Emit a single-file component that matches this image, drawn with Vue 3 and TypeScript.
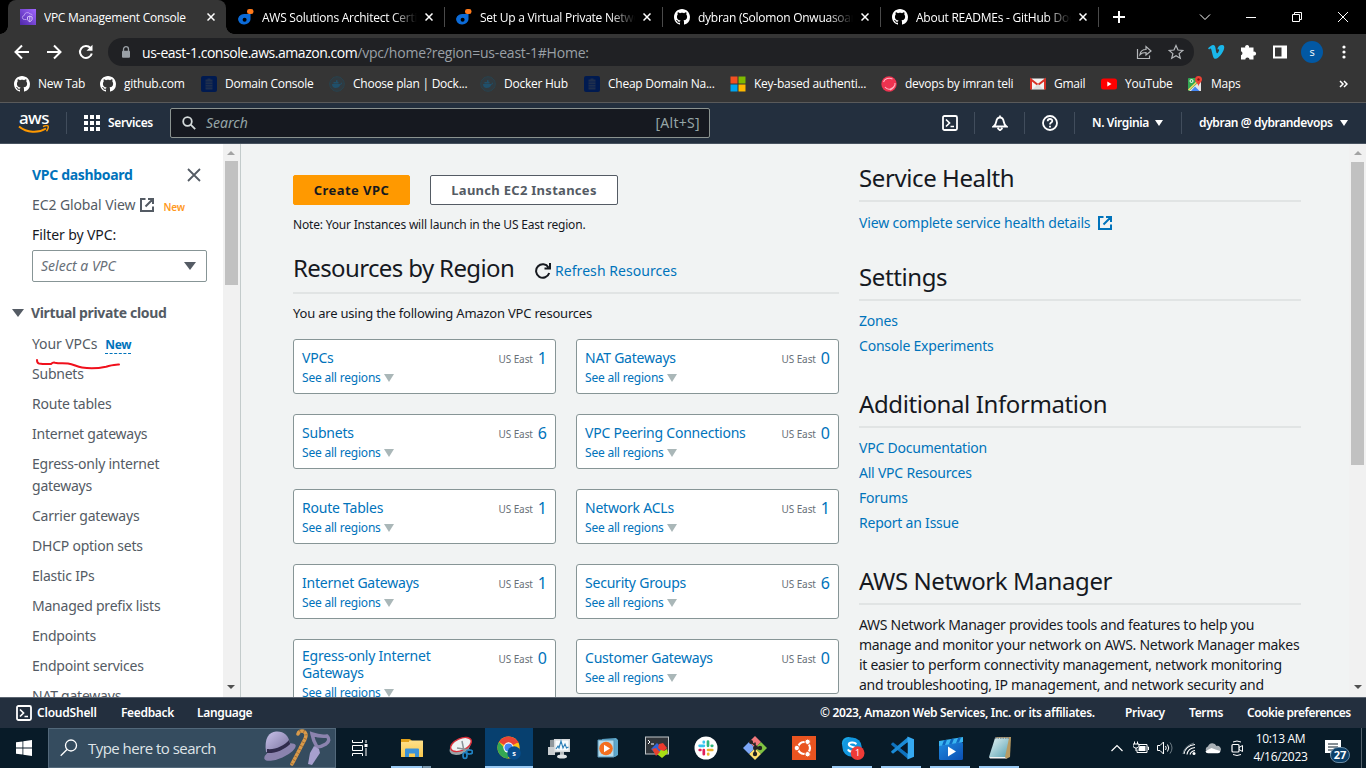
<script setup lang="ts">
interface Tab { title: string; icon: string; active?: boolean }
interface Card { name: string; count: number }
interface Task { icon: string; state?: string }

const tabs: Tab[] = [
  { title: 'VPC Management Console', icon: 'vpc', active: true },
  { title: 'AWS Solutions Architect Certi', icon: 'do' },
  { title: 'Set Up a Virtual Private Netwo', icon: 'do' },
  { title: 'dybran (Solomon Onwuasoan', icon: 'github' },
  { title: 'About READMEs - GitHub Doc', icon: 'github' },
]

const bookmarks: { label: string; icon: string }[] = [
  { label: 'New Tab', icon: 'github' },
  { label: 'github.com', icon: 'github' },
  { label: 'Domain Console', icon: 'domain' },
  { label: 'Choose plan | Dock...', icon: 'docker' },
  { label: 'Docker Hub', icon: 'docker' },
  { label: 'Cheap Domain Na...', icon: 'domain' },
  { label: 'Key-based authenti...', icon: 'microsoft' },
  { label: 'devops by imran teli', icon: 'ball' },
  { label: 'Gmail', icon: 'gmail' },
  { label: 'YouTube', icon: 'youtube' },
  { label: 'Maps', icon: 'maps' },
]

const sideLinks: string[] = [
  'Subnets', 'Route tables', 'Internet gateways', 'Egress-only internet gateways',
  'Carrier gateways', 'DHCP option sets', 'Elastic IPs', 'Managed prefix lists',
  'Endpoints', 'Endpoint services', 'NAT gateways',
]

const cards: Card[] = [
  { name: 'VPCs', count: 1 },
  { name: 'NAT Gateways', count: 0 },
  { name: 'Subnets', count: 6 },
  { name: 'VPC Peering Connections', count: 0 },
  { name: 'Route Tables', count: 1 },
  { name: 'Network ACLs', count: 1 },
  { name: 'Internet Gateways', count: 1 },
  { name: 'Security Groups', count: 6 },
  { name: 'Egress-only Internet Gateways', count: 0 },
  { name: 'Customer Gateways', count: 0 },
]

const infoLinks: string[] = ['VPC Documentation', 'All VPC Resources', 'Forums', 'Report an Issue']

const tasks: Task[] = [
  { icon: 'explorer', state: 'open stacked' },
  { icon: 'snip' },
  { icon: 'chrome', state: 'focused' },
  { icon: 'perfmon' },
  { icon: 'media' },
  { icon: 'terminal' },
  { icon: 'slack' },
  { icon: 'git' },
  { icon: 'ubuntu' },
  { icon: 'skype', state: 'open' },
  { icon: 'vscode', state: 'open' },
  { icon: 'films', state: 'open' },
  { icon: 'notepad', state: 'open' },
]

const trayIcons: string[] = ['chevron', 'battery', 'speaker', 'wifi', 'cloud', 'camera']
</script>

<template>
  <div class="screen">
    <svg class="defs" width="0" height="0">
      <defs>
        <linearGradient id="gVpc" x1="0" y1="1" x2="1" y2="0"><stop offset="0" stop-color="#4d27a8" /><stop offset="1" stop-color="#a166ff" /></linearGradient>
        <linearGradient id="gFolder" x1="0" y1="0" x2="0" y2="1"><stop offset="0" stop-color="#ffe08a" /><stop offset="1" stop-color="#f9c84c" /></linearGradient>
        <linearGradient id="gFilm" x1="0" y1="0" x2="1" y2="1"><stop offset="0" stop-color="#1f8be0" /><stop offset="1" stop-color="#0b4fb3" /></linearGradient>
        <linearGradient id="gPad" x1="0" y1="0" x2="1" y2="1"><stop offset="0" stop-color="#e6f4f4" /><stop offset="1" stop-color="#5aa3b4" /></linearGradient>
        <linearGradient id="gHat" x1="0" y1="0" x2="1" y2="1"><stop offset="0" stop-color="#c9c2ea" /><stop offset="1" stop-color="#77709c" /></linearGradient>
      </defs>

      <symbol id="vpc" viewBox="0 0 16 16">
        <rect width="16" height="16" fill="url(#gVpc)" />
        <path d="M6.500 10.500H4.600a2 2 0 0 1-.4-4A3.200 3.200 0 0 1 10 4.900a2 2 0 0 1 2.300 1.500" fill="none" stroke="#c9aef8" stroke-width=".8" />
        <path d="M7.500 7.900l2.300-.8 2.300.8v2.200c0 1.200-1 2-2.300 2.600-1.300-.6-2.300-1.400-2.300-2.600zM9.800 7.100v5.500" fill="none" stroke="#e8dcff" stroke-width=".8" />
      </symbol>
      <symbol id="do" viewBox="0 0 16 16">
        <path d="M8 5h4.500v5.200a6.200 5.300 0 1 1-4.500-5.100z" fill="#0c6bd8" />
        <circle cx="6.600" cy="10.700" r="2" fill="#000" />
        <rect x="9" y="0" width="6.500" height="5" rx="2.300" fill="#ff7a1a" />
      </symbol>
      <symbol id="github" viewBox="0 0 16 16">
        <path fill="#fff" d="M8 0C3.58 0 0 3.58 0 8c0 3.54 2.29 6.53 5.47 7.59.4.07.55-.17.55-.38 0-.19-.01-.82-.01-1.49-2.01.37-2.53-.49-2.69-.94-.09-.23-.48-.94-.82-1.13-.28-.15-.68-.52-.01-.53.63-.01 1.08.58 1.23.82.72 1.21 1.87.87 2.33.66.07-.52.28-.87.51-1.07-1.78-.2-3.64-.89-3.64-3.95 0-.87.31-1.59.82-2.15-.08-.2-.36-1.02.08-2.12 0 0 .67-.21 2.2.82.64-.18 1.32-.27 2-.27.68 0 1.36.09 2 .27 1.53-1.04 2.2-.82 2.2-.82.44 1.1.16 1.92.08 2.12.51.56.82 1.27.82 2.15 0 3.07-1.87 3.75-3.65 3.95.29.25.54.73.54 1.48 0 1.07-.01 1.93-.01 2.2 0 .21.15.46.55.38A8.013 8.013 0 0 0 16 8c0-4.420-3.580-8-8-8z" />
      </symbol>
      <symbol id="domain" viewBox="0 0 16 16">
        <rect width="16" height="16" rx="2" fill="#001a50" />
        <path d="M6.500 2.500h3v1h2v10h-7v-10h2z" fill="#1f2f4d" />
        <path d="M4.500 6h7M4.500 8.500h7M4.500 11h7" stroke="#001a50" stroke-width=".6" />
      </symbol>
      <symbol id="docker" viewBox="0 0 16 16">
        <circle cx="8" cy="8" r="7.300" fill="#303a40" stroke="#28434f" stroke-width="1" />
        <path d="M3 8h8.500c.2-1 .8-1.500 1.500-1.600-.1 1.600-.8 2.200-1.700 2.300C10.500 11 9 12 6.800 12 4.300 12 3 10.500 3 8zM4.500 6h5v1.500h-5zM7 4.300h1.500V6H7z" fill="#20506b" />
      </symbol>
      <symbol id="microsoft" viewBox="0 0 16 16">
        <path d="M.5.5h7v7h-7z" fill="#f25022" /><path d="M8.500.5h7v7h-7z" fill="#7fba00" /><path d="M.5 8.500h7v7h-7z" fill="#00a4ef" /><path d="M8.500 8.500h7v7h-7z" fill="#ffb900" />
      </symbol>
      <symbol id="ball" viewBox="0 0 16 16">
        <circle cx="8" cy="8" r="7.700" fill="#ee3350" /><path d="M2.500 6a6 5 0 0 1 9-3M4 11c3 4 8 2 10-2M9 14c3-1 5.500-4 5-7" stroke="#ffb3c0" stroke-width="1.100" fill="none" />
      </symbol>
      <symbol id="gmail" viewBox="0 0 16 16">
        <rect x="1" y="2.500" width="14" height="11" rx="1" fill="#f2f2f2" /><path d="M1 13.500v-10l7 5.500 7-5.500v10" fill="none" stroke="#d93025" stroke-width="2" /><path d="M3 13l5-5 5 5z" fill="#ddd" />
      </symbol>
      <symbol id="youtube" viewBox="0 0 16 16">
        <rect y="2.500" width="16" height="11" rx="2.500" fill="#f00" /><path d="M6.300 5.600v4.800l4.200-2.400z" fill="#fff" />
      </symbol>
      <symbol id="maps" viewBox="0 0 16 16">
        <rect x="1" y="2" width="13" height="13" rx="1" fill="#34a853" /><path d="M2 15L14 4v11z" fill="#e5e5e5" /><path d="M4 15l4-4.500L12.500 15z" fill="#4285f4" /><path d="M1.500 14L13 3" stroke="#fdd663" stroke-width="1.500" /><path d="M11.500 0a3.500 3.500 0 0 1 3.500 3.500c0 2.500-3 3.500-3.500 7-.5-3.500-3.500-4.500-3.500-7A3.500 3.500 0 0 1 11.500 0z" fill="#ea4335" /><circle cx="11.500" cy="3.500" r="1.200" fill="#811" /><circle cx="4.500" cy="5" r="1.500" fill="none" stroke="#fff" />
      </symbol>
      <symbol id="external" viewBox="0 0 16 16">
        <path d="M6.500 2H2v12h12V9.500M9 2h5v5M14 2L6.500 9.500" fill="none" stroke="currentColor" stroke-width="2" />
      </symbol>
      <symbol id="shell" viewBox="0 0 16 16">
        <rect x="1" y="1" width="14" height="14" rx="1.500" fill="none" stroke="#fff" stroke-width="1.800" /><path d="M4 4.500L7.500 8 4 11.500M8.500 11.500H12" fill="none" stroke="#fff" stroke-width="1.700" />
      </symbol>

      <symbol id="explorer" viewBox="0 0 24 24">
        <path d="M1 3h9l2 2H1z" fill="#d99a10" /><rect x="1" y="4.500" width="22" height="16.500" rx=".5" fill="url(#gFolder)" /><path d="M1 3h8v3H1z" fill="#e3a21a" /><path d="M5 21v-7.500q0-1 1-1h12q1 0 1 1V21h-4v-3.500H9V21z" fill="#3b92d9" />
      </symbol>
      <symbol id="snip" viewBox="0 0 24 24">
        <ellipse cx="11" cy="11.500" rx="11" ry="6.500" transform="rotate(-24 11 11.500)" fill="#9aa3a8" /><ellipse cx="12" cy="8.500" rx="11" ry="6" transform="rotate(-24 12 8.500)" fill="#eef2f3" stroke="#d92f3a" stroke-width="1.400" /><path d="M8 12l13 2M13 5l2 10" stroke="#8a9499" stroke-width="1.500" /><ellipse cx="20.500" cy="16" rx="3" ry="2" fill="none" stroke="#2183c4" stroke-width="1.700" /><ellipse cx="16" cy="19.500" rx="2" ry="3" fill="none" stroke="#2183c4" stroke-width="1.700" />
      </symbol>
      <symbol id="chrome" viewBox="0 0 26 26">
        <circle cx="12.500" cy="12.500" r="12" fill="#fbc116" /><path d="M12.500 12.500L2.100 6.500A12 12 0 0 1 23 6.700z" fill="#ea4335" /><path d="M2.100 6.500A12 12 0 0 0 11.500 24.500l6-9.500-8-.500z" fill="#34a853" /><path d="M12.500 6.500h10.400" stroke="#ea4335" stroke-width="2" /><circle cx="12.500" cy="12.500" r="5.600" fill="#fff" /><circle cx="12.500" cy="12.500" r="4.400" fill="#4285f4" /><circle cx="18.500" cy="18.500" r="7.300" fill="#074d8c" /><text x="18.500" y="21.300" text-anchor="middle" class="badge-text">s</text>
      </symbol>
      <symbol id="perfmon" viewBox="0 0 24 24">
        <path d="M3 4l14-1v13L3 17z" fill="#8f979c" /><path d="M1 11h7v8H1z" fill="#c9cdd0" /><path d="M7 3h16v13H7z" fill="#d6dadc" /><path d="M8.500 4.500h13v10h-13z" fill="#f7fbfd" /><path d="M9 13l2-3 1 2 2-7 2 7 2-4 1.500 4 2-1" fill="none" stroke="#2b7fb8" stroke-width="1.100" /><path d="M13 16h4v3h-4z" fill="#b6bbbe" /><ellipse cx="15" cy="20.500" rx="5" ry="2" fill="#dfe3e5" />
      </symbol>
      <symbol id="media" viewBox="0 0 24 24">
        <path d="M6 3l14-1 2 2v15l-3 2H8z" fill="#5ea8cc" /><path d="M2 4h16v17H2z" fill="#b5dcec" stroke="#5695b8" /><circle cx="10" cy="12.500" r="6.800" fill="#f36f1f" /><path d="M8 8.700v7.600l6-3.800z" fill="#fff" />
      </symbol>
      <symbol id="terminal" viewBox="0 0 24 24">
        <rect x=".5" y="1" width="23" height="17" fill="#30353a" stroke="#c0c5c8" /><path d="M3 4l2 2-2 2M6 8h3" stroke="#fff" fill="none" /><path d="M6 13l6-6 6 6-6 6z" fill="#2e64d8" /><path d="M14 8l4-1 4 5-4 4-5-4z" fill="#ee3a2c" /><path d="M12 18l4-4 3 1 3-2 1 4-6 5z" fill="#a7de14" /><path d="M7 13l4-1 4 4-4 4z" fill="#e8412f" />
      </symbol>
      <symbol id="slack" viewBox="0 0 24 24">
        <circle cx="12" cy="12" r="11.500" fill="#fff" /><g stroke-width="2.700" stroke-linecap="round"><path d="M9.800 5.800v.7M5.600 9.800h4.300" stroke="#36c5f0" /><path d="M14 5.500v4.300M18.300 9.800h-.6" stroke="#2eb67d" /><path d="M14 14h4.300M14.200 18.400v-.6" stroke="#ecb22e" /><path d="M9.800 14.200v4M5.700 14h.7" stroke="#e01e5a" /></g>
      </symbol>
      <symbol id="git" viewBox="0 0 24 24">
        <path d="M12 0l6 6-6 6-6-6z" fill="#f0787c" /><path d="M18 6l6 6-6 6-6-6z" fill="#80c342" /><path d="M12 12l6 6-6 6-6-6z" fill="#ffdf6e" /><path d="M6 6l6 6-6 6-6-6z" fill="#7da7f7" /><path d="M12 6.500v11M8 6l8 6.500h-4" stroke="#222" stroke-width="1.500" fill="none" /><circle cx="8" cy="6" r="2" fill="#222" /><circle cx="12" cy="12" r="2" fill="#222" /><circle cx="12" cy="18" r="2.200" fill="#222" /><circle cx="17" cy="12" r="2.200" fill="#222" />
      </symbol>
      <symbol id="ubuntu" viewBox="0 0 24 24">
        <rect width="24" height="24" fill="#e95420" /><circle cx="12" cy="12" r="6" fill="none" stroke="#fff" stroke-width="2.200" /><g fill="#fff" stroke="#e95420"><circle cx="4.800" cy="12" r="2.700" /><circle cx="15.600" cy="5.800" r="2.700" /><circle cx="15.600" cy="18.200" r="2.700" /></g>
      </symbol>
      <symbol id="skype" viewBox="0 0 26 26">
        <circle cx="8" cy="8" r="7" fill="#1aa7e8" /><circle cx="16" cy="16" r="7" fill="#0b87cc" /><circle cx="12" cy="12" r="10.500" fill="#1298e0" /><path d="M16 8.300c-1-1.600-7.500-2-7.500 1 0 3.400 7.700 1.800 7.700 5.200 0 3.200-7 3-8.200.8" fill="none" stroke="#fff" stroke-width="2.300" stroke-linecap="round" /><circle cx="18" cy="18.500" r="7.500" fill="#ef3b37" /><text x="18" y="22" text-anchor="middle" class="badge-one">1</text>
      </symbol>
      <symbol id="vscode" viewBox="0 0 24 24">
        <path d="M1 8l2-1.700L18 18v5L1.500 9z" fill="#0f72bd" /><path d="M1 16l2 1.700L18 6V1L1.500 15z" fill="#1b8bd6" /><path d="M17.500.5L24 3.200v17.600l-6.500 2.700z" fill="#35a9f1" /><path d="M17.500 6.500v11L10.500 12z" fill="#06192a" />
      </symbol>
      <symbol id="films" viewBox="0 0 24 24">
        <rect y="6" width="24" height="18" rx="1.500" fill="url(#gFilm)" /><path d="M0 5l24-4v5l-24 4z" fill="#39b5f1" /><path d="M5 4.200l3-.5-2 5.300-3 .5zM12 3l3-.5-2 5.300-3 .5zM19 1.900l3-.5-2 5.200-3 .5z" fill="#0f67bf" /><path d="M9 10.500v10l8-5z" fill="#fff" />
      </symbol>
      <symbol id="notepad" viewBox="0 0 24 24">
        <path d="M8 1h15l-1 20-4 2z" fill="#b89b62" /><path d="M7 2h14l-4 19H1z" fill="url(#gPad)" /><path d="M1 21h16l1.500 1.500L2 22.500z" fill="#f4f4f4" /><path d="M7 2h14" stroke="#7d8588" stroke-width="1.500" stroke-dasharray="1.500 1" />
      </symbol>

      <symbol id="chevron" viewBox="0 0 16 16"><path d="M2.500 11L8 5.500l5.500 5.500" fill="none" stroke="#fff" stroke-width="1.200" /></symbol>
      <symbol id="battery" viewBox="0 0 16 16"><path d="M5.500 4.500H14v8H4V9.500M14.500 7h1v3" fill="none" stroke="#fff" /><path d="M6.500 6H12.500v5h-7V9z" fill="#fff" /><path d="M1.500 1.500v2.500M4.500 1.500v2.500M0 4h6v2.500L4 8H2L0 6.500zM3 8v3" fill="none" stroke="#fff" /></symbol>
      <symbol id="speaker" viewBox="0 0 16 16"><path d="M.5 5.500h2.500l3.500-3.500v12L3 10.500H.5z" fill="none" stroke="#fff" /><path d="M8.500 6q1.500 2 0 4M10.500 4.500q2.500 3.500 0 7" fill="none" stroke="#fff" /><path d="M13 2.500q4 5.500 0 11" fill="none" stroke="#6f7d86" /></symbol>
      <symbol id="wifi" viewBox="0 0 16 16"><path d="M3 14C3.500 9 7.500 5 14 4.500M6 14.500C6.500 11 9.500 8 14 7.500M9 14.500C9.500 12.500 11 11 14 10.500" fill="none" stroke="#fff" stroke-width="1.100" /><path d="M2 14Q3 6 13 3" fill="none" stroke="#82919a" stroke-width=".8" /><circle cx="13" cy="13.500" r="1.500" fill="#fff" /></symbol>
      <symbol id="cloud" viewBox="0 0 16 16"><path d="M1 10.500a3 3 0 0 1 2-4 4.500 4.500 0 0 1 8.500-.5 3.500 3.500 0 0 1 4 5z" fill="#a9b0b5" /><path d="M.5 11l6-3 4 1.500 5 1.500q-.5 2.200-2.500 2.200H3Q.7 13.200.5 11z" fill="#fff" /></symbol>
      <symbol id="camera" viewBox="0 0 16 16"><rect x="3" y="4.500" width="7" height="7.500" rx="1" fill="none" stroke="#fff" stroke-width="1.200" /><path d="M10 7.500l3.500-2v6L10 9.500M4 2q4-2 8 0M4 14.500q4 2 8 0" fill="none" stroke="#fff" /></symbol>
    </svg>

    <!-- browser chrome -->
    <header class="tabstrip">
      <div v-for="(tab, i) in tabs" :key="i" class="tab" :class="{ active: tab.active }">
        <svg class="ico16"><use :href="'#' + tab.icon" /></svg>
        <span class="tab-title">{{ tab.title }}</span>
        <svg class="tab-close" viewBox="0 0 8 8"><path d="M.5.5l7 7M7.500.5l-7 7" /></svg>
      </div>
      <svg class="plus" viewBox="0 0 12 12"><path d="M6 0v12M0 6h12" /></svg>
      <div class="win-controls">
        <svg viewBox="0 0 12 12"><path d="M1 3.500l5 5 5-5" /></svg>
        <svg viewBox="0 0 12 12"><path d="M1 6.500h10" /></svg>
        <svg viewBox="0 0 12 12"><path d="M1.500 3.500h7v7h-7zM3.500 3.500v-2h7v7h-2" /></svg>
        <svg viewBox="0 0 12 12"><path d="M1 1l10 10M11 1L1 11" /></svg>
      </div>
    </header>

    <div class="toolbar">
      <div class="nav-buttons">
        <svg viewBox="0 0 16 16"><path d="M15 8H2M8 1.500L1.500 8 8 14.500" /></svg>
        <svg viewBox="0 0 16 16"><path d="M1 8h13M8 1.500L14.500 8 8 14.500" /></svg>
        <svg viewBox="0 0 16 16"><path d="M13.800 9.500A6 6 0 1 1 12.500 4" /><path d="M14.500.8v6H8.500z" class="solid" /></svg>
      </div>
      <div class="omnibox">
        <svg class="lock" viewBox="0 0 10 13"><path d="M2.500 5V3.200a2.500 2.500 0 0 1 5 0V5" fill="none" stroke="#9aa0a6" stroke-width="1.300" /><rect x="1" y="4.800" width="8" height="7" rx="1" fill="#9aa0a6" /></svg>
        <span class="url"><b>us-east-1.console.aws.amazon.com</b>/vpc/home?region=us-east-1#Home:</span>
        <svg class="omni-ico" viewBox="0 0 16 16"><path d="M1.500 5v9.500h12v-3M4 10.500c.5-3.500 3-5 6-5V2.500L15 7l-5 4V8.500c-2.500 0-4.500.3-6 2z" /></svg>
        <svg class="omni-ico" viewBox="0 0 16 16"><path d="M8 1.500l2 4.500 4.800.4-3.700 3.200 1.200 4.700L8 11.800l-4.300 2.500 1.200-4.700L1.200 6.400 6 6z" /></svg>
      </div>
      <div class="extensions">
        <svg viewBox="0 0 18 18"><path d="M1 5.200C3 3.500 4.800 2 6 1.900c2.800-.3 2.500 4 3.300 7 .6 2.200 1.200 1.500 2.200-.2 1-1.600 1-3.100-1.300-2.300C11 3 13 1.700 15.300 1.900c1.800.2 2.300 1.600 1.700 4-.9 3.600-5.500 9.600-8.300 9.800-2.200.1-2.700-2.400-3.300-4.800C4.600 8 4.300 5.600 3.600 5.600c-.4 0-1 .5-1.500.9z" fill="#1ab7ea" /></svg>
        <svg viewBox="0 0 18 18"><path d="M2 4.500h4.200a2 2 0 1 1 3.800 0h4.500v4.200a2 2 0 1 1 0 3.800v4h-4a2.100 2.100 0 0 0-4.200 0H2v-4.200a2.100 2.100 0 0 0 0-4z" fill="#fff" /></svg>
        <svg viewBox="0 0 18 18"><path d="M3 3.500h12v11H3z" fill="none" stroke="#fff" stroke-width="2" /><path d="M10.500 3h5v12h-5z" fill="#fff" /></svg>
        <span class="avatar">s</span>
        <svg viewBox="0 0 18 18" fill="#fff"><circle cx="9" cy="4" r="1.600" /><circle cx="9" cy="9" r="1.600" /><circle cx="9" cy="14" r="1.600" /></svg>
      </div>
    </div>

    <div class="bookmarks">
      <div v-for="(b, i) in bookmarks" :key="i" class="bookmark">
        <svg class="ico16"><use :href="'#' + b.icon" /></svg><span>{{ b.label }}</span>
      </div>
      <svg class="more" viewBox="0 0 9 8"><path d="M1 1l3 3-3 3M5 1l3 3-3 3" /></svg>
    </div>

    <!-- console navigation -->
    <nav class="aws-nav">
      <div class="logo-cell">
        <div class="logo">
          <span>aws</span>
          <svg viewBox="0 0 32 10"><path d="M1 1.500C9 8 20 8.500 28 3.500" fill="none" stroke="#f90" stroke-width="2" /><path d="M25 1.600c2-.9 4.300-1.200 5-.6.700.700-.1 3.600-1.500 5.200" fill="none" stroke="#f90" stroke-width="1.400" /></svg>
        </div>
      </div>
      <div class="services">
        <svg viewBox="0 0 16 16" fill="#fff"><path d="M0 0h4v4H0zM6 0h4v4H6zM12 0h4v4h-4zM0 6h4v4H0zM6 6h4v4H6zM12 6h4v4h-4zM0 12h4v4H0zM6 12h4v4H6zM12 12h4v4h-4z" /></svg>
        <span>Services</span>
      </div>
      <div class="nav-search">
        <svg viewBox="0 0 14 14"><circle cx="5.500" cy="5.500" r="4.300" /><path d="M8.700 8.700l4.500 4.500" /></svg>
        <i>Search</i>
        <span>[Alt+S]</span>
      </div>
      <div class="nav-right">
        <div class="nav-icon"><svg><use href="#shell" /></svg></div>
        <div class="nav-icon"><svg viewBox="0 0 16 16"><path d="M8 .5v2M1.500 11.500c2-1.500 2.500-3 2.800-5C4.700 3.800 6 2.500 8 2.500s3.300 1.300 3.700 4c.3 2 .8 3.500 2.800 5zM5.500 13L8 15.300l2.500-2.300" /></svg></div>
        <div class="nav-icon"><svg viewBox="0 0 16 16"><circle cx="8" cy="8" r="7" /><path d="M5.700 6.300c0-3 4.600-3 4.600-.3C10.300 7.700 8 7.500 8 9.500M8 10.800v1.700" /></svg></div>
        <div class="region"><span>N. Virginia</span><i class="caret"></i></div>
        <div class="account"><span>dybran @ dybrandevops</span><i class="caret"></i></div>
      </div>
    </nav>

    <main class="body">
      <aside class="sidebar">
        <div class="side-head">
          <a>VPC dashboard</a>
          <svg viewBox="0 0 14 14"><path d="M1 1l12 12M13 1L1 13" /></svg>
        </div>
        <div class="side-row ec2"><span>EC2 Global View</span><svg class="ico16 ext"><use href="#external" /></svg><em>New</em></div>
        <div class="side-row dark">Filter by VPC:</div>
        <div class="select"><i>Select a VPC</i><b></b></div>
        <div class="side-section"><b></b><span>Virtual private cloud</span></div>
        <div class="side-row vpcs"><span>Your VPCs</span><strong>New</strong>
          <svg class="scribble" viewBox="0 0 84 12"><path d="M1 1q0 3 2 3.500c4 .7 8 .6 12 .5q2-2 4-1.300c4 1 8 .3 13 .8 6 .8 8 3 14 4 8 1.300 17 .7 24-.8 5-1.200 9-2.500 13-2.200" /></svg>
        </div>
        <div v-for="l in sideLinks" :key="l" class="side-row">{{ l }}</div>
      </aside>
      <div class="scroll side-scroll"><i class="up"></i><b></b><i class="down"></i></div>

      <section class="content">
        <div class="left">
          <div class="buttons"><button class="primary">Create VPC</button><button>Launch EC2 Instances</button></div>
          <p class="note">Note: Your Instances will launch in the US East region.</p>
          <div class="title-row">
            <h2>Resources by Region</h2>
            <svg viewBox="0 0 16 16"><path d="M14.200 10A6.700 6.700 0 1 1 13.500 4.500M15 0v5.500H9.500" /></svg>
            <a>Refresh Resources</a>
          </div>
          <p class="using">You are using the following Amazon VPC resources</p>
          <div class="cards">
            <div v-for="c in cards" :key="c.name" class="card" :class="{ tall: c.name.length > 25 }">
              <div class="card-main">
                <a class="card-name">{{ c.name }}</a>
                <a class="card-sub">See all regions<b></b></a>
              </div>
              <div class="count"><small>US East</small><span>{{ c.count }}</span></div>
            </div>
          </div>
        </div>
        <div class="right">
          <h2>Service Health</h2>
          <div class="links health"><a>View complete service health details<svg class="ico16"><use href="#external" /></svg></a></div>
          <h2>Settings</h2>
          <div class="links settings"><a>Zones</a><a>Console Experiments</a></div>
          <h2>Additional Information</h2>
          <div class="links info"><a v-for="l in infoLinks" :key="l">{{ l }}</a></div>
          <h2>AWS Network Manager</h2>
          <p class="manager">AWS Network Manager provides tools and features to help you<br>manage and monitor your network on AWS. Network Manager makes<br>it easier to perform connectivity management, network monitoring<br>and troubleshooting, IP management, and network security and</p>
        </div>
      </section>
      <div class="scroll main-scroll"><i class="up"></i><b></b><i class="down"></i></div>
    </main>

    <footer class="aws-footer">
      <svg><use href="#shell" /></svg>
      <span class="f1">CloudShell</span><span class="f2">Feedback</span><span class="f3">Language</span>
      <span class="copyright">© 2023, Amazon Web Services, Inc. or its affiliates.</span>
      <span class="f4">Privacy</span><span class="f5">Terms</span><span class="f6">Cookie preferences</span>
    </footer>

    <div class="taskbar">
      <div class="start"><svg viewBox="0 0 16 16" fill="#fff"><path d="M0 2.300l6.500-.9v6.200H0zM7.300 1.300L16 0v7.600H7.300zM0 8.400h6.500v6.200L0 13.700zM7.300 8.400H16V16l-8.700-1.300z" /></svg></div>
      <div class="win-search">
        <svg class="mag" viewBox="0 0 18 18"><circle cx="11" cy="6.500" r="5.500" /><path d="M7 10.500l-6.300 6.300" /></svg>
        <span>Type here to search</span>
        <svg class="hat" viewBox="0 0 68 38">
          <ellipse cx="17" cy="23" rx="17" ry="6" transform="rotate(-24 17 23)" fill="#8b83ae" />
          <path d="M3 23C1 9 6 3 13 2.500 21 2 25 6 27 14c-5 7-16 11-24 9z" fill="url(#gHat)" />
          <path d="M4 20c8 1 17-3 22-9l1.200 4C21 21 12 24.500 4 24z" fill="#302b4c" />
          <path d="M29 35L42 10C46 1 36 0 35 5" fill="none" stroke="#d89a4b" stroke-width="3.600" stroke-linecap="round" />
          <path d="M29 35L42 10C46 1 36 0 35 5" fill="none" stroke="#a06a30" stroke-width="3.200" stroke-dasharray=".8 3.200" />
          <path d="M49 5q8 3 15 2 4 4-1 8-5 3-9 3-4-7-5-13z" fill="none" stroke="#8b83ae" stroke-width="3.500" />
          <path d="M51 17l5 3 1 4-8 12-4-1 2-11z" fill="#a79fce" />
        </svg>
      </div>
      <div class="taskview"><svg viewBox="0 0 16 16"><path d="M.5 0v2.500h10V0M.5 5.500h10v5H.5zM.5 16v-2.500h10V16M14 0v3M14 8v8" /><path d="M12.500 4h3v3h-3z" fill="#fff" stroke="none" /></svg></div>
      <div class="tasks">
        <div v-for="t in tasks" :key="t.icon" class="task" :class="t.state"><svg><use :href="'#' + t.icon" /></svg></div>
      </div>
      <div class="tray">
        <div v-for="t in trayIcons" :key="t" class="tray-icon"><svg><use :href="'#' + t" /></svg></div>
        <div class="clock"><span>10:13 AM</span><span>4/16/2023</span></div>
        <div class="notif">
          <svg viewBox="0 0 16 16"><path d="M0 0h16v13H9l-4 3v-3H0z" fill="#fff" /><path d="M3 4h10M3 7h10M3 10h6" stroke="#0a1c28" /></svg>
          <span>27</span>
        </div>
      </div>
    </div>
  </div>
</template>

<style>
body { margin: 0; overflow: hidden; }
</style>

<style scoped>
* { box-sizing: border-box; }
.screen { width: 1366px; height: 768px; display: flex; flex-direction: column; overflow: hidden; font-family: "Noto Sans", sans-serif; position: relative; }
.defs { position: absolute; }
svg { display: block; flex: none; }
p, h2 { margin: 0; font-weight: 400; }
.ico16 { width: 16px; height: 16px; }

.tabstrip { height: 34px; background: #000; display: flex; align-items: center; padding-left: 8px; flex: none; font-family: "Open Sans", sans-serif; }
.tab { width: 218px; height: 34px; padding: 0 0 0 12px; display: flex; align-items: center; color: #fff; font-size: 12px; position: relative; }
.tab.active { background: #353535; border-radius: 8px 8px 0 0; }
.tab.active::before, .tab.active::after { content: ""; position: absolute; bottom: 0; width: 8px; height: 8px; background: radial-gradient(circle at 0 0, transparent 7.500px, #353535 8px); }
.tab.active::before { left: -8px; }
.tab.active::after { right: -8px; background: radial-gradient(circle at 100% 0, transparent 7.500px, #353535 8px); }
.tab:not(.active)::after { content: ""; position: absolute; right: -1px; top: 7px; width: 1px; height: 20px; background: #4a4a4a; }
.tab-title { width: 155px; margin-left: 8px; overflow: hidden; white-space: nowrap; letter-spacing: -0.25px; }
.tab:not(.active) .tab-title { -webkit-mask-image: linear-gradient(90deg, #000 130px, transparent 155px); mask-image: linear-gradient(90deg, #000 130px, transparent 155px); }
.tab-close { width: 8px; height: 8px; margin-left: 8px; fill: none; stroke: #fff; stroke-width: 1.500; }
.plus { width: 12px; height: 12px; margin-left: 15px; stroke: #fff; stroke-width: 2; }
.win-controls { margin-left: auto; display: flex; align-items: center; height: 28px; }
.win-controls svg { width: 12px; height: 12px; margin: 0 17px; fill: none; stroke: #fff; stroke-width: 1; }

.toolbar { height: 36px; background: #353535; display: flex; align-items: center; flex: none; }
.nav-buttons { width: 108px; padding-left: 14px; display: flex; gap: 16px; }
.nav-buttons svg { width: 16px; height: 16px; fill: none; stroke: #fff; stroke-width: 2; }
.nav-buttons .solid { fill: #fff; stroke: none; }
.omnibox { width: 1086px; height: 28px; border-radius: 14px; background: #202124; display: flex; align-items: center; padding: 0 10px 0 13px; color: #9aa0a6; }
.lock { width: 10px; height: 13px; }
.url { margin-left: 11px; flex: 1; font-family: "Open Sans", sans-serif; font-size: 14px; letter-spacing: -0.2px; white-space: nowrap; }
.url b { font-weight: 400; color: #fff; letter-spacing: -0.46px; }
.omni-ico { width: 16px; height: 16px; margin-left: 16px; fill: none; stroke: #b5b8bb; stroke-width: 1.200; }
.extensions { display: flex; align-items: center; padding-left: 6px; }
.extensions svg { width: 18px; height: 18px; margin: 0 7px; }
.avatar { width: 22px; height: 22px; border-radius: 50%; background: #0258a3; color: #fff; font: 11px/21px "Open Sans", sans-serif; text-align: center; margin: 0 6px 0 5px; }
.extensions .avatar + svg { margin-left: 6px; }

.bookmarks { height: 32px; background: #353535; display: grid; grid-template-columns: 86px 101px 128px 151px 104px 146px 151px 149px 71px 86px 1fr auto; align-items: center; padding: 0 18px 4px 14px; flex: none; color: #fff; font: 12px/20px "Open Sans", sans-serif; }
.bookmark { display: flex; gap: 8px; align-items: center; white-space: nowrap; letter-spacing: -0.25px; }
.more { width: 9px; height: 8px; fill: none; stroke: #fff; stroke-width: 1.500; }

.aws-nav { height: 42px; background: #232f3e; border-top: 1px solid #5a5a5a; border-bottom: 1px solid #47525f; display: flex; align-items: center; flex: none; color: #fff; font-size: 12px; font-weight: 600; letter-spacing: -0.36px; }
.logo-cell { width: 67px; height: 22px; padding-left: 18px; border-right: 1px solid #414d5c; display: flex; align-items: center; }
.logo { width: 32px; }
.logo span { display: block; height: 13px; font: 500 17px/11px "Noto Sans", sans-serif; letter-spacing: -0.5px; text-align: center; }
.logo svg { width: 32px; height: 10px; }
.services { width: 103px; padding-left: 17px; display: flex; align-items: center; gap: 8px; }
.services span, .region span, .account span { margin-top: -2px; }
.services svg { width: 16px; height: 16px; }
.nav-search { width: 540px; height: 30px; border: 1px solid #8b9390; border-radius: 2px; background: #161920; display: flex; align-items: center; padding: 0 9px 0 11px; color: #95a5a6; font-weight: 400; font-size: 14px; letter-spacing: 0; }
.nav-search span { letter-spacing: 0.3px; }
.nav-search span, .nav-search i { margin-top: -2px; }
.nav-search svg { width: 14px; height: 14px; fill: none; stroke: #d5dbdb; stroke-width: 1.800; }
.nav-search i { margin-left: 10px; flex: 1; }
.nav-right { margin-left: auto; display: flex; align-items: center; }
.nav-icon { width: 50px; height: 22px; border-right: 1px solid #414d5c; display: flex; align-items: center; justify-content: center; }
.nav-icon svg { width: 16px; height: 16px; fill: none; stroke: #fff; stroke-width: 1.800; }
.region, .account { display: flex; align-items: center; height: 22px; white-space: nowrap; }
.region { width: 107px; border-right: 1px solid #414d5c; padding: 0 18px 0 17px; justify-content: space-between; }
.account { width: 184px; padding: 0 18px 0 17px; justify-content: space-between; }
.caret { border: 4px solid transparent; border-top: 6px solid #fff; border-bottom: 0; }

.body { height: 553px; display: flex; flex: none; background: #f1f3f3; overflow: hidden; }
.sidebar { width: 223px; background: #fff; padding: 20px 16px 0 32px; font-size: 14px; line-height: 22px; letter-spacing: -0.23px; color: #545b64; overflow: hidden; flex: none; }
.side-head { display: flex; justify-content: space-between; align-items: center; height: 22px; margin-bottom: 8px; padding-right: 6px; font-weight: 700; letter-spacing: -0.32px; color: #0073bb; }
.side-head svg { width: 14px; height: 14px; stroke: #545b64; stroke-width: 1.800; }
.side-row { margin-bottom: 8px; padding-right: 30px; position: relative; }
.ec2 { display: flex; align-items: center; height: 22px; padding: 0; white-space: nowrap; letter-spacing: -0.1px; }
.ec2 .ext { margin-left: 4px; }
.ec2 em { font-style: normal; color: #ff9a1f; font-size: 10px; font-weight: 600; margin-left: 8px; padding-top: 3px; }
.dark { color: #16191f; margin-bottom: 4px; letter-spacing: -0.1px; }
.select { width: 175px; height: 32px; border: 1px solid #879596; border-radius: 2px; display: flex; align-items: center; justify-content: space-between; padding: 0 10px 0 8px; color: #687078; letter-spacing: 0; }
.select b, .side-section b { border: 6px solid transparent; border-top: 8px solid #545b64; border-bottom: 0; }
.side-section { margin: 20px 0 9px -20px; display: flex; align-items: center; gap: 7px; font-weight: 700; white-space: nowrap; letter-spacing: -0.35px; }
.side-section b { border-width: 8px 6px 0 6px; }
.vpcs { display: flex; align-items: center; height: 22px; letter-spacing: -0.1px; }
.vpcs strong { margin-left: 8px; color: #0073bb; font-size: 12px; line-height: 16px; border-bottom: 1px dashed #0073bb; margin-top: 3px; letter-spacing: -0.35px; }
.scribble { position: absolute; left: 4px; top: 26px; width: 84px; height: 12px; fill: none; stroke: #f0101c; stroke-width: 2; stroke-linecap: round; z-index: 2; overflow: visible; }
.scroll { width: 17px; background: #f1f1f1; display: flex; flex-direction: column; align-items: center; flex: none; }
.scroll i { border: 4px solid transparent; }
.scroll .up { border-top: 0; border-bottom: 4px solid #a3a3a3; margin: 7px 0; }
.scroll .down { border-bottom: 0; border-top: 4px solid #505050; margin: auto 0 8px; }
.scroll b { width: 13px; background: #c1c1c1; }
.side-scroll b { height: 124px; margin-top: -1px; }
.main-scroll b { height: 303px; }
.side-scroll { width: 18px; padding-right: 1px; border-right: 1px solid #c3cbcb; }
.content { flex: 1; display: flex; gap: 20px; padding-left: 52px; overflow: hidden; color: #16191f; }
a { color: #0073bb; }
.left { width: 546px; padding-top: 31px; flex: none; }
.buttons { display: flex; gap: 20px; }
button { width: 188px; height: 30px; background: #fff; border: 1px solid #545b64; border-radius: 2px; color: #545b64; font: 700 13px/20px "Noto Sans", sans-serif; letter-spacing: 0.28px; padding: 0; white-space: nowrap; }
button.primary { width: 117px; background: #ff9900; border-color: #ff9900; color: #16191f; letter-spacing: 0.45px; }
.note { font-size: 12px; line-height: 18px; letter-spacing: -0.19px; margin-top: 11px; white-space: nowrap; }
.title-row { height: 60px; display: flex; align-items: center; border-bottom: 2px solid #e1e4e4; white-space: nowrap; }
h2 { font-size: 24px; line-height: 34px; letter-spacing: -0.4px; }
.title-row h2 { width: 242px; margin-top: 9px; letter-spacing: -0.63px; }
.title-row svg { width: 16px; height: 16px; fill: none; stroke: #16191f; stroke-width: 2; margin-top: 15px; }
.title-row a { margin: 15px 0 0 4px; font-size: 14px; letter-spacing: 0.06px; }
.using { font-size: 13px; line-height: 20px; letter-spacing: -0.21px; margin-top: 9px; }
.cards { margin-top: 16px; display: grid; grid-template-columns: 263px 263px; grid-auto-rows: 55px; gap: 20px; }
.card { background: #fff; border: 1px solid #879596; border-radius: 3px; padding: 8px 8px 0; display: flex; justify-content: space-between; }
.card-main { display: flex; flex-direction: column; }
.card-name { font-size: 14px; line-height: 20px; letter-spacing: -0.22px; }
.card-sub { font-size: 12px; line-height: 18px; letter-spacing: -0.2px; margin-top: 1px; display: flex; align-items: center; }
.card-sub b { border: 5px solid transparent; border-top: 8px solid #aab7b8; border-bottom: 0; margin-left: 3px; }
.card.tall { height: 72px; padding-top: 7px; }
.card.tall .card-name { width: 150px; line-height: 17px; }
.card.tall .card-sub { margin-top: 3px; }
.card.tall .count { padding-top: 1px; }
.count { display: flex; align-items: baseline; gap: 5px; line-height: 20px; }
.count small { font-size: 10px; color: #687078; letter-spacing: -0.1px; position: relative; top: -1px; }
.count span { font-size: 16px; color: #0073bb; }
.right { width: 442px; padding-top: 17px; white-space: nowrap; }
.right h2 { height: 41px; border-bottom: 2px solid #e1e4e4; }
.links { display: flex; flex-direction: column; font-size: 14px; line-height: 25px; letter-spacing: -0.22px; }
.links a { display: flex; align-items: center; }
.links svg { margin-left: 7px; }
.health { padding-top: 8px; height: 58px; letter-spacing: -0.165px; }
.settings { padding-top: 7px; height: 86px; }
.info { padding-top: 7px; height: 136px; }
.manager { font-size: 14px; line-height: 20px; letter-spacing: -0.29px; padding-top: 10px; }

.aws-footer { height: 31px; background: #232f3e; border-top: 1px solid #5b6470; display: flex; align-items: center; padding: 0 16px; flex: none; color: #fff; font-size: 12px; font-weight: 600; letter-spacing: -0.34px; white-space: nowrap; }
.aws-footer svg { width: 16px; height: 16px; }
.aws-footer span { margin-top: -2px; }
.aws-footer .f1 { width: 84px; margin-left: 5px; letter-spacing: -0.2px; }
.f2 { width: 76px; }
.aws-footer .copyright { margin-left: auto; width: 305px; }
.f4 { width: 64px; }
.f5 { width: 58px; }
.f6 { width: 103px; letter-spacing: -0.5px; }

.taskbar { height: 40px; background: #081b28; display: flex; flex: none; font-family: "Open Sans", sans-serif; color: #fff; }
.start, .taskview { width: 48px; display: flex; align-items: center; justify-content: center; }
.start svg, .taskview svg { width: 16px; height: 16px; }
.taskview svg { fill: none; stroke: #fff; }
.win-search { width: 288px; background: #354c5f; border: 1px solid #52687a; display: flex; align-items: center; padding: 0 4px 0 11px; }
.mag { width: 18px; height: 18px; fill: none; stroke: #fff; stroke-width: 1.300; }
.win-search span { margin-left: 10px; flex: 1; font-size: 15px; letter-spacing: -0.53px; color: #dfe4e8; white-space: nowrap; }
.hat { width: 68px; height: 38px; }
.tasks { display: flex; margin-left: 3px; }
.task { width: 49px; height: 40px; display: flex; align-items: center; justify-content: center; position: relative; }
.task svg { width: 24px; height: 24px; }
.task.open::after { content: ""; position: absolute; left: 4px; bottom: 0; width: 40px; height: 2px; background: #99c9f3; }
.task.stacked::after { background: linear-gradient(90deg, #99c9f3 31px, #3d5c73 31px, #3d5c73 32px, #7896ad 32px); }
.task.focused { background: #07406f; border-bottom: 2px solid #99c9f3; padding-top: 2px; width: 48px; margin-right: 1px; }
.tray { margin-left: auto; display: flex; align-items: center; padding-right: 4px; }
.tray-icon { width: 24px; display: flex; justify-content: center; }
.tray-icon svg { width: 16px; height: 16px; }
.clock { width: 63px; display: flex; flex-direction: column; align-items: center; font-size: 12px; line-height: 18px; letter-spacing: -0.3px; }
.notif { width: 50px; height: 40px; border-right: 1px solid #53616c; padding: 12px 0 0 13px; position: relative; }
.notif svg { width: 16px; height: 16px; }
.notif span { position: absolute; left: 18px; top: 19px; width: 20px; height: 16px; border-radius: 8px; background: #0c4069; border: 1px solid #6b8ba3; font: 700 11px/14px "Open Sans", sans-serif; text-align: center; }
.badge-text { font: 700 8px "Open Sans", sans-serif; fill: #fff; }
.badge-one { font: 10px "Open Sans", sans-serif; fill: #fff; }
</style>
